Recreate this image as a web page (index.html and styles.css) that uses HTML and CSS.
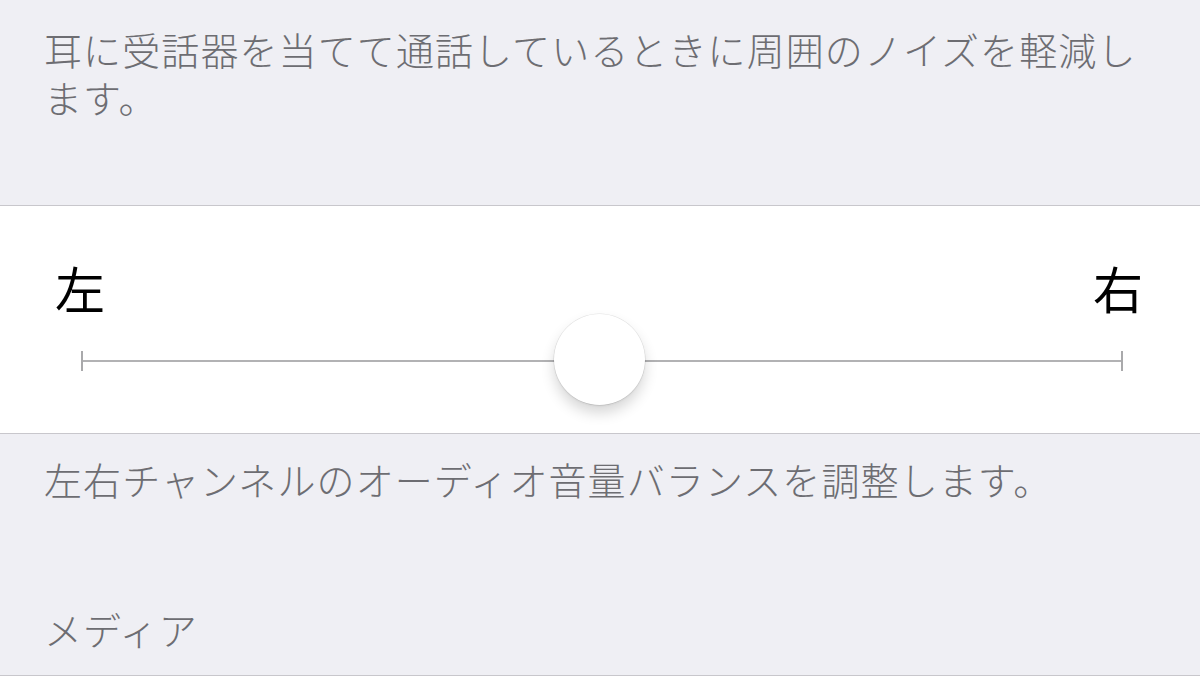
FILE: index.html
```html
<!DOCTYPE html>
<html lang="ja">
<head>
<meta charset="utf-8">
<link rel="stylesheet" href="styles.css">
</head>
<body>
<div class="page">
  <p class="footer-text top-footer">耳に受話器を当てて通話しているときに周囲のノイズを軽減します。</p>
  <div class="cell slider-cell">
    <div class="labels">
      <span class="label">左</span>
      <span class="label">右</span>
    </div>
    <div class="slider">
      <span class="tick"></span>
      <span class="track"></span>
      <span class="tick"></span>
      <span class="thumb"></span>
    </div>
  </div>
  <p class="footer-text bottom-footer">左右チャンネルのオーディオ音量バランスを調整します。</p>
  <p class="footer-text section-header">メディア</p>
  <div class="cell next-cell"></div>
</div>
</body>
</html>
```

FILE: styles.css
```css
html, body {
  margin: 0;
  padding: 0;
  background: #efeff4;
  overflow: hidden;
}
.page {
  width: 1200px;
  height: 677px;
  display: flex;
  flex-direction: column;
  font-family: "Noto Sans CJK JP", "Noto Sans", sans-serif;
}
.footer-text {
  margin: 0;
  padding: 0 50px 0 44px;
  color: #6d6d72;
  font-size: 38px;
  font-weight: 300;
  line-height: 48px;
  letter-spacing: 1.1px;
}
.top-footer {
  padding-top: 25px;
  height: 205px;
  box-sizing: border-box;
  flex-shrink: 0;
}
.cell {
  background: #ffffff;
  border-top: 1px solid #c8c7cc;
  border-bottom: 1px solid #c8c7cc;
}
.slider-cell {
  height: 229px;
  box-sizing: border-box;
  padding-top: 56px;
  flex-shrink: 0;
}
.labels {
  display: flex;
  justify-content: space-between;
  padding: 0 57px 0 55px;
}
.label {
  font-size: 50px;
  line-height: 50px;
  color: #000;
}
.slider {
  position: relative;
  margin: 39px 0 0 81px;
  width: 1042px;
  height: 20px;
  display: flex;
  align-items: center;
}
.tick {
  width: 2px;
  height: 20px;
  background: #a9a9ab;
}
.track {
  flex: 1;
  height: 2px;
  background: #b2b2b4;
}
.thumb {
  position: absolute;
  left: 473px;
  top: -37px;
  width: 91px;
  height: 91px;
  border-radius: 50%;
  background: #fff;
  box-shadow: 0 0 0 0.5px rgba(0,0,0,0.1), 0 8px 14px rgba(0,0,0,0.16), 0 1px 2px rgba(0,0,0,0.08);
}
.bottom-footer {
  padding-top: 21px;
}
.section-header {
  margin-top: 102px;
  padding-bottom: 22px;
}
.next-cell {
  flex: 1;
  border-bottom: none;
}
```
